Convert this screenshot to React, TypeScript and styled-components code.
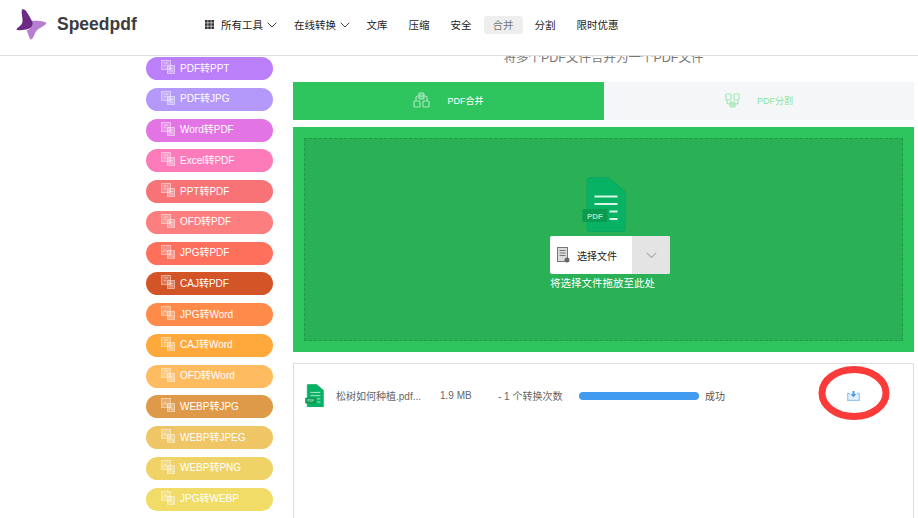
import React from "react";
import styled, { createGlobalStyle } from "styled-components";

const GlobalStyle = createGlobalStyle`
  html, body {
    margin: 0;
    padding: 0;
    background: #fff;
    overflow: hidden;
  }
  * {
    box-sizing: border-box;
  }
  body {
    font-family: "Liberation Sans", "Noto Sans CJK SC", sans-serif;
  }
`;

const NAV_ITEMS = [
  { label: "文库" },
  { label: "压缩" },
  { label: "安全" },
  { label: "合并", active: true },
  { label: "分割" },
  { label: "限时优惠", wide: true },
];

const TOOLS = [
  { label: "PDF转PPT", color: "#bc7ffa", kind: "doc" },
  { label: "PDF转JPG", color: "#b499fb", kind: "doc" },
  { label: "Word转PDF", color: "#e274e4", kind: "doc" },
  { label: "Excel转PDF", color: "#fd7bb9", kind: "doc" },
  { label: "PPT转PDF", color: "#f77376", kind: "doc" },
  { label: "OFD转PDF", color: "#fc7e7e", kind: "doc" },
  { label: "JPG转PDF", color: "#fe6f5c", kind: "pic" },
  { label: "CAJ转PDF", color: "#d35427", kind: "doc" },
  { label: "JPG转Word", color: "#ff8a4a", kind: "pic" },
  { label: "CAJ转Word", color: "#ffa93c", kind: "doc" },
  { label: "OFD转Word", color: "#ffbb60", kind: "doc" },
  { label: "WEBP转JPG", color: "#de9a48", kind: "pic" },
  { label: "WEBP转JPEG", color: "#f0c566", kind: "pic" },
  { label: "WEBP转PNG", color: "#f0d366", kind: "pic" },
  { label: "JPG转WEBP", color: "#f0dc66", kind: "pic" },
];

const Page = styled.div`
  width: 918px;
  height: 518px;
  overflow: hidden;
  display: flex;
  flex-direction: column;
`;

const Header = styled.header`
  height: 56px;
  flex: none;
  display: flex;
  align-items: center;
  border-bottom: 1px solid #dedede;
  padding: 0 0 6px 16px;
  background: #fff;
`;

const Brand = styled.div`
  width: 189px;
  display: flex;
  align-items: center;
  gap: 10px;
  font-size: 17.5px;
  font-weight: 700;
  color: #3d3d3d;
`;

const Nav = styled.nav`
  display: flex;
  align-items: center;
  font-size: 10.5px;
  color: #222;
  white-space: nowrap;
`;

const NavDrop = styled.div<{ $width: number }>`
  width: ${(p) => p.$width}px;
  display: flex;
  align-items: center;
  gap: 4px;
`;

const ToolsLabel = styled.span`
  margin-left: 3px;
`;

const NavLink = styled.a<{ $active?: boolean; $wide?: boolean }>`
  width: ${(p) => (p.$wide ? 60 : 39)}px;
  height: 18px;
  margin-right: ${(p) => (p.$wide ? 0 : 3)}px;
  display: flex;
  align-items: center;
  justify-content: center;
  border-radius: 3px;
  background: ${(p) => (p.$active ? "#eeeeee" : "transparent")};
  color: ${(p) => (p.$active ? "#777" : "#222")};
`;

const Body = styled.div`
  flex: 1;
  min-height: 0;
  display: flex;
  padding-left: 146px;
`;

const Sidebar = styled.aside`
  width: 127px;
  flex: none;
  padding-top: 1px;
  display: flex;
  flex-direction: column;
  gap: 7.75px;
`;

const Pill = styled.a<{ $color: string }>`
  height: 23px;
  flex: none;
  border-radius: 12px;
  background: ${(p) => p.$color};
  color: #fff;
  font-size: 10px;
  display: flex;
  align-items: center;
  gap: 5px;
  padding: 0 0 3px 15px;
`;

const Main = styled.main`
  width: 621px;
  margin-left: 20px;
  flex: none;
  display: flex;
  flex-direction: column;
`;

const SubtitleClip = styled.div`
  height: 26px;
  overflow: hidden;
`;

const Subtitle = styled.p`
  margin: -5px 0 0;
  height: 14px;
  line-height: 14px;
  text-align: center;
  font-size: 12.5px;
  color: #777;
`;

const Tabs = styled.div`
  display: grid;
  grid-template-columns: 311px 310px;
  height: 38px;
`;

const Tab = styled.div<{ $active?: boolean }>`
  display: flex;
  align-items: center;
  justify-content: center;
  gap: 17px;
  font-size: 9px;
  padding-bottom: 2px;
  background: ${(p) => (p.$active ? "#2fc55e" : "#f4f6f8")};
  color: ${(p) => (p.$active ? "#fff" : "#86e69f")};
`;

const DropZone = styled.section`
  margin-top: 7px;
  height: 225px;
  padding: 11px;
  background: #2fc55e;
`;

const DropInner = styled.div`
  height: 203px;
  border: 1px dashed #1f9a46;
  background: #2bb155;
  display: flex;
  flex-direction: column;
  align-items: flex-start;
  padding: 38px 0 0 245px;
`;

const FileIconSlot = styled.div`
  margin-left: 32px;
  display: flex;
`;

const SelectButton = styled.div`
  margin-top: 4px;
  width: 120px;
  height: 38px;
  display: flex;
  border-radius: 2px;
  overflow: hidden;
  background: #fff;
`;

const SelectLabel = styled.div`
  flex: 1;
  display: flex;
  align-items: center;
  gap: 7px;
  padding-left: 7px;
  font-size: 10px;
  color: #222;
`;

const SelectArrow = styled.div`
  width: 38px;
  display: flex;
  align-items: center;
  justify-content: center;
  background: #e4e4e4;
`;

const DropHint = styled.div`
  margin-top: 2px;
  height: 14px;
  line-height: 14px;
  font-size: 10.5px;
  color: #fff;
  white-space: nowrap;
`;

const FileList = styled.section`
  margin-top: 11px;
  flex: 1;
  border: 1px solid #dedede;
  border-bottom: none;
`;

const FileRow = styled.div`
  height: 63px;
  display: flex;
  align-items: center;
  padding-left: 11px;
  font-size: 10px;
  color: #666;
`;

const FileName = styled.span`
  width: 104px;
  margin-left: 12px;
  white-space: nowrap;
`;

const FileSize = styled.span`
  width: 58px;
`;

const FileCount = styled.span`
  width: 81px;
  white-space: nowrap;
`;

const Progress = styled.div`
  width: 120px;
  height: 8px;
  border-radius: 4px;
  background: #419cf0;
`;

const FileStatus = styled.span`
  margin-left: 6px;
  width: 142px;
  color: #555;
`;

const DownloadWrap = styled.div`
  position: relative;
  width: 14px;
  height: 14px;
  display: flex;
  align-items: center;
`;

const Circle = styled.svg`
  position: absolute;
  left: -29px;
  top: -23px;
`;

const Chevron = ({ color = "#444", size = 10 }: { color?: string; size?: number }) => (
  <svg width={size} height={size * 0.6} viewBox="0 0 10 6" fill="none">
    <path d="M.7.7 5 5 9.3.7" stroke={color} strokeWidth="1" />
  </svg>
);

const Logo = () => (
  <svg width="31" height="31" viewBox="0 0 31 31">
    <path d="M14 12c5-.5 11-.5 15 1 1.500.5 1.500 1.500.5 2.500-3 2.500-7 3.500-9.500 7-1.500 2.500-2.500 6-4 7.500-1 .8-1.800.3-2.200-.5-1-2.500-2-5-3-8 3-1 5.500-3 3.700-9.500z" fill="#b67fd2" />
    <path d="M6 .5c2-1 4 1 5 3 2 3 4 6 5.500 10 .5 3-1.500 5.500-4.500 6.500-3 1-7 1.500-10.500 1-1.200-.2-1.200-1-.3-1.700 2.500-2 5-3.500 5.300-7 .3-3.500-1.500-8-.5-11.800z" fill="#6c2a85" />
  </svg>
);

const GridIcon = () => (
  <svg width="9" height="9" viewBox="0 0 9 9" fill="#333">
    {[0, 3.2, 6.4].flatMap((y) =>
      [0, 3.2, 6.4].map((x) => <rect key={`${x}-${y}`} x={x} y={y} width="2.600" height="2.600" />)
    )}
  </svg>
);

const ConvertIcon = ({ kind }: { kind: string }) => (
  <svg width="14" height="14" viewBox="0 0 14 14" fill="none" stroke="#fff" strokeOpacity=".45" strokeWidth="1">
    <rect x=".5" y=".5" width="9" height="9" fill="#fff" fillOpacity=".22" />
    <rect x="6.500" y="5.500" width="7" height="8" fill="#fff" fillOpacity=".28" />
    {kind === "pic" ? (
      <path d="M1.500 7.500 4 4l2 3M7.500 12l2-3 3 3" />
    ) : (
      <path d="M3 3h4M3 5.500h2M8 8.500h4M8 11h4" />
    )}
  </svg>
);

const MergeIcon = () => (
  <svg width="17" height="16" viewBox="0 0 17 16" fill="none" stroke="#a8e6bd" strokeWidth="1.200">
    <rect x="1" y="9" width="6" height="6" rx="1" />
    <rect x="10" y="9" width="6" height="6" rx="1" />
    <path d="M3 9V6a2 2 0 0 1 2-2h7a2 2 0 0 1 2 2v3" />
    <rect x="6" y="1" width="5" height="6" rx="1" fill="#a8e6bd" fillOpacity=".4" />
  </svg>
);

const SplitIcon = () => (
  <svg width="15" height="15" viewBox="0 0 15 15" fill="none" stroke="#a5e8b5" strokeWidth="1.200">
    <rect x="1" y="1" width="5" height="6" rx="1" />
    <rect x="9" y="1" width="5" height="6" rx="1" />
    <path d="M2 7v2a2 2 0 0 0 2 2h7a2 2 0 0 0 2-2V7" />
    <rect x="5" y="9" width="5" height="5" rx="1" fill="#a5e8b5" fillOpacity=".6" />
  </svg>
);

const PdfFileIcon = ({ width }: { width: number }) => (
  <svg width={width} height={width * 1.25} viewBox="0 0 43 55">
    <path d="M7 .5h19l16.500 14V52a2.500 2.500 0 0 1-2.500 2.500H7A2.500 2.500 0 0 1 4.500 52V3A2.500 2.500 0 0 1 7 .5z" fill="#07b264" stroke="#0ea65c" />
    <path d="M12 19.500h23M12 27h23M27 34.500h8M27 42h8" stroke="#d8f5e5" strokeWidth="1.800" />
    <rect x="0" y="32" width="25" height="13" rx="1" fill="#0a9a52" />
    <text x="12.500" y="41.500" fontSize="8" fontWeight="700" textAnchor="middle" fill="#9fe3bf" fontFamily="Liberation Sans, sans-serif">PDF</text>
  </svg>
);

const SelectIcon = () => (
  <svg width="13" height="16" viewBox="0 0 13 16" fill="none">
    <rect x=".5" y=".5" width="10" height="14" fill="#ddd" stroke="#777" />
    <path d="M2.500 3.500h6M2.500 6h6M2.500 8.500h6" stroke="#777" />
    <circle cx="10" cy="13" r="2.500" fill="#666" />
  </svg>
);

const DownloadIcon = () => (
  <svg width="13" height="10" viewBox="0 0 13 10" fill="none">
    <path d="M3 2.500H.7v6.800h11.600V2.500H10" fill="#e6f1fc" stroke="#9ac6f3" strokeWidth="1.300" />
    <path d="M5.500 0h2v3H9.500L6.500 6.500 3.500 3h2z" fill="#4f9dea" />
  </svg>
);

export default function App() {
  return (
    <Page>
      <GlobalStyle />
      <Header>
        <Brand>
          <Logo />
          Speedpdf
        </Brand>
        <Nav>
          <NavDrop $width={89}>
            <GridIcon />
            <ToolsLabel>所有工具</ToolsLabel>
            <Chevron />
          </NavDrop>
          <NavDrop $width={63.5}>
            在线转换
            <Chevron />
          </NavDrop>
          {NAV_ITEMS.map((item) => (
            <NavLink key={item.label} $active={item.active} $wide={item.wide}>
              {item.label}
            </NavLink>
          ))}
        </Nav>
      </Header>
      <Body>
        <Sidebar>
          {TOOLS.map((tool) => (
            <Pill key={tool.label} $color={tool.color}>
              <ConvertIcon kind={tool.kind} />
              {tool.label}
            </Pill>
          ))}
        </Sidebar>
        <Main>
          <SubtitleClip>
            <Subtitle>将多个PDF文件合并为一个PDF文件</Subtitle>
          </SubtitleClip>
          <Tabs>
            <Tab $active>
              <MergeIcon />
              PDF合并
            </Tab>
            <Tab>
              <SplitIcon />
              PDF分割
            </Tab>
          </Tabs>
          <DropZone>
            <DropInner>
              <FileIconSlot>
                <PdfFileIcon width={44} />
              </FileIconSlot>
              <SelectButton>
                <SelectLabel>
                  <SelectIcon />
                  选择文件
                </SelectLabel>
                <SelectArrow>
                  <Chevron color="#aaa" size={11} />
                </SelectArrow>
              </SelectButton>
              <DropHint>将选择文件拖放至此处</DropHint>
            </DropInner>
          </DropZone>
          <FileList>
            <FileRow>
              <PdfFileIcon width={19} />
              <FileName>松树如何种植.pdf...</FileName>
              <FileSize>1.9 MB</FileSize>
              <FileCount>- 1 个转换次数</FileCount>
              <Progress />
              <FileStatus>成功</FileStatus>
              <DownloadWrap>
                <DownloadIcon />
                <Circle width="72" height="54" viewBox="0 0 72 54" fill="none">
                  <ellipse cx="36" cy="27" rx="32" ry="23.500" stroke="#fb3a3a" strokeWidth="7" />
                </Circle>
              </DownloadWrap>
            </FileRow>
          </FileList>
        </Main>
      </Body>
    </Page>
  );
}
